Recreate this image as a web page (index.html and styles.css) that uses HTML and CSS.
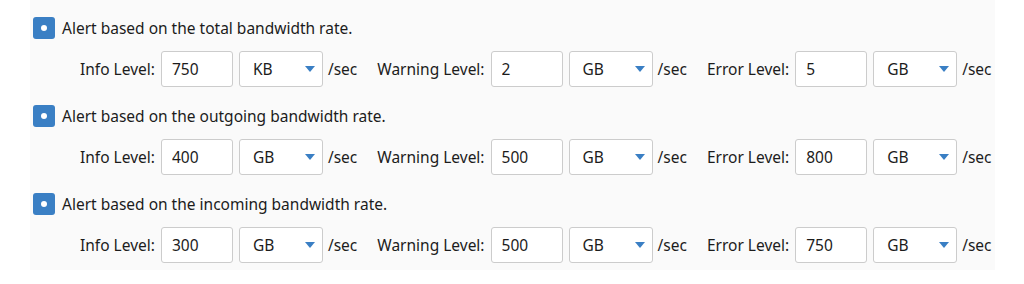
FILE: index.html
```html
<!DOCTYPE html>
<html lang="en">
<head>
    <meta charset="UTF-8" />
    <title>Bandwidth Alerts</title>
    <link rel="stylesheet" href="styles.css">
</head>
<body>
    <div class="panel">
        <div class="alert-group">
            <label class="alert-check">
                <span class="checkbox"><span class="dot"></span></span>
                Alert based on the total bandwidth rate.
            </label>
            <div class="levels">
                <span class="level-label">Info Level:</span>
                <input class="level-input" type="text" value="750" />
                <div class="unit-select"><span>KB</span><span class="caret"></span></div>
                <span class="per">/sec</span>
                <span class="level-label">Warning Level:</span>
                <input class="level-input" type="text" value="2" />
                <div class="unit-select"><span>GB</span><span class="caret"></span></div>
                <span class="per">/sec</span>
                <span class="level-label">Error Level:</span>
                <input class="level-input" type="text" value="5" />
                <div class="unit-select"><span>GB</span><span class="caret"></span></div>
                <span class="per">/sec</span>
            </div>
        </div>

        <div class="alert-group">
            <label class="alert-check">
                <span class="checkbox"><span class="dot"></span></span>
                Alert based on the outgoing bandwidth rate.
            </label>
            <div class="levels">
                <span class="level-label">Info Level:</span>
                <input class="level-input" type="text" value="400" />
                <div class="unit-select"><span>GB</span><span class="caret"></span></div>
                <span class="per">/sec</span>
                <span class="level-label">Warning Level:</span>
                <input class="level-input" type="text" value="500" />
                <div class="unit-select"><span>GB</span><span class="caret"></span></div>
                <span class="per">/sec</span>
                <span class="level-label">Error Level:</span>
                <input class="level-input" type="text" value="800" />
                <div class="unit-select"><span>GB</span><span class="caret"></span></div>
                <span class="per">/sec</span>
            </div>
        </div>

        <div class="alert-group">
            <label class="alert-check">
                <span class="checkbox"><span class="dot"></span></span>
                Alert based on the incoming bandwidth rate.
            </label>
            <div class="levels">
                <span class="level-label">Info Level:</span>
                <input class="level-input" type="text" value="300" />
                <div class="unit-select"><span>GB</span><span class="caret"></span></div>
                <span class="per">/sec</span>
                <span class="level-label">Warning Level:</span>
                <input class="level-input" type="text" value="500" />
                <div class="unit-select"><span>GB</span><span class="caret"></span></div>
                <span class="per">/sec</span>
                <span class="level-label">Error Level:</span>
                <input class="level-input" type="text" value="750" />
                <div class="unit-select"><span>GB</span><span class="caret"></span></div>
                <span class="per">/sec</span>
            </div>
        </div>
    </div>
</body>
</html>
```

FILE: styles.css
```css
body {
    margin: 0;
    padding: 0;
    background: #ffffff;
    font-family: 'Noto Sans', 'Open Sans', sans-serif;
    color: #1c1c1c;
}

.panel {
    margin: 0 29px 0 30px;
    padding: 17px 0 7px 3px;
    background: #fafafa;
}

.alert-group {
    margin-bottom: 18px;
}

.alert-group:last-child {
    margin-bottom: 0;
}

.alert-check {
    display: flex;
    align-items: center;
    gap: 7px;
    font-size: 15.5px;
    height: 22px;
    white-space: nowrap;
}

.checkbox {
    flex-shrink: 0;
    width: 22px;
    height: 22px;
    border-radius: 3px;
    background: #3a7fc4;
    display: flex;
    align-items: center;
    justify-content: center;
}

.dot {
    width: 6px;
    height: 6px;
    border-radius: 50%;
    background: #ffffff;
}

.levels {
    display: flex;
    align-items: center;
    margin-top: 12px;
    padding-left: 47px;
    font-size: 15.5px;
    white-space: nowrap;
}

.level-label {
    flex-shrink: 0;
    margin-right: 6px;
}

.level-input {
    flex-shrink: 0;
    box-sizing: border-box;
    width: 72px;
    height: 36px;
    padding: 0 10px;
    border: 1px solid #cccccc;
    border-radius: 3px;
    background: #ffffff;
    font-family: inherit;
    font-size: 15.5px;
    color: #1c1c1c;
    outline: none;
}

.unit-select {
    flex-shrink: 0;
    box-sizing: border-box;
    width: 84px;
    height: 36px;
    margin-left: 6px;
    padding: 0 7px 0 13px;
    border: 1px solid #cccccc;
    border-radius: 3px;
    background: #ffffff;
    display: flex;
    align-items: center;
    justify-content: space-between;
}

.caret {
    width: 0;
    height: 0;
    border-left: 5px solid transparent;
    border-right: 5px solid transparent;
    border-top: 6px solid #3a7fc4;
}

.per {
    flex-shrink: 0;
    margin-left: 5px;
    margin-right: 20px;
}

.per:last-child {
    margin-right: 0;
}
```
